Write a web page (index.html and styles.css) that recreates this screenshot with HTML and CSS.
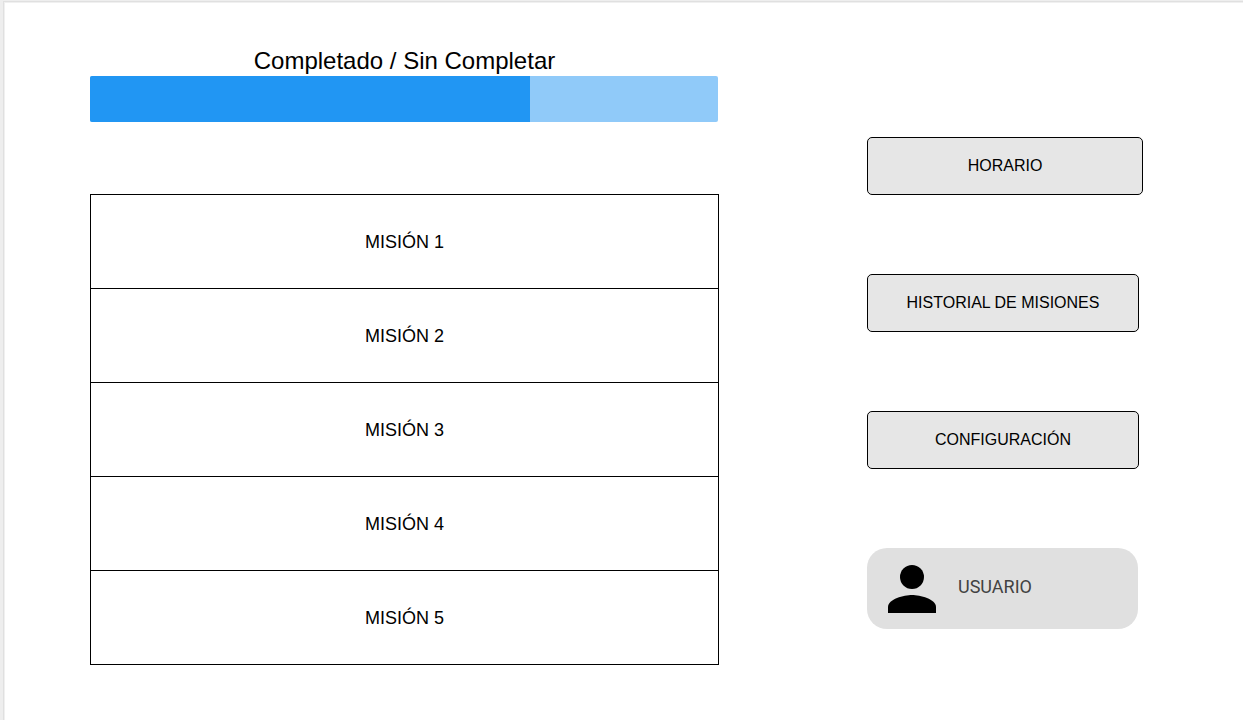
FILE: index.html
```html
<!DOCTYPE html>
<html lang="es">
<head>
<meta charset="utf-8">
<meta name="viewport" content="width=device-width, initial-scale=1">
<title>Misiones</title>
<link rel="stylesheet" href="styles.css">
</head>
<body>
<div class="page">
  <main class="missions">
    <label class="progress-label" for="progress">Completado / Sin Completar</label>
    <progress class="progress" id="progress" value="70" max="100"></progress>
    <ul class="mission-list">
      <li class="mission">MISIÓN 1</li>
      <li class="mission">MISIÓN 2</li>
      <li class="mission">MISIÓN 3</li>
      <li class="mission">MISIÓN 4</li>
      <li class="mission">MISIÓN 5</li>
    </ul>
  </main>
  <nav class="menu">
    <button class="menu-button menu-button-wide" type="button">HORARIO</button>
    <button class="menu-button" type="button">HISTORIAL DE MISIONES</button>
    <button class="menu-button" type="button">CONFIGURACIÓN</button>
    <button class="user-button" type="button">
      <svg class="user-icon" viewBox="0 0 48 48" aria-hidden="true">
        <circle cx="24" cy="12" r="12"/>
        <path d="M24 30C16 30 0 34 0 42V48H48V42C48 34 32 30 24 30Z"/>
      </svg>
      <span class="user-name">USUARIO</span>
    </button>
  </nav>
</div>
</body>
</html>
```
FILE: styles.css
```css
* {
  box-sizing: border-box;
}

body {
  margin: 0;
  padding: 1px 0 0 3px;
  background: #eeeeee;
  color: #000;
  font-family: "Liberation Sans", Arial, sans-serif;
}

.page {
  display: grid;
  grid-template-columns: 629fr 276fr;
  column-gap: 148px;
  min-height: calc(100vh - 1px);
  padding: 44px 100px 20px 86px;
  border-top: 1px solid #e0e0e0;
  border-left: 1px solid #e0e0e0;
  background: #fff;
  box-shadow: inset 1px 1px #f0f0f0;
}

.missions {
  display: flex;
  flex-direction: column;
}

.progress-label {
  font-size: 24px;
  line-height: 30px;
  text-align: center;
}

.progress {
  appearance: none;
  display: block;
  width: 100%;
  height: 46px;
  padding-right: 1px;
  border: 0;
  background: transparent;
}

.progress::-webkit-progress-bar {
  border-radius: 2px;
  background: #90caf9;
  overflow: hidden;
}

.progress::-webkit-progress-value {
  background: #2196f3;
}

.mission-list {
  margin: 72px 0 0;
  padding: 0;
  border: 1px solid #000;
  border-bottom: 0;
  list-style: none;
}

.mission {
  display: flex;
  align-items: center;
  justify-content: center;
  height: 94px;
  padding-top: 2px;
  border-bottom: 1px solid #000;
  font-size: 18px;
}

.menu {
  display: flex;
  flex-direction: column;
  gap: 79px;
  padding: 91px 4px 0 0;
}

.menu-button {
  height: 58px;
  padding: 0 8px;
  border: 1px solid #000;
  border-radius: 5px;
  background: #e6e6e6;
  color: #000;
  font-family: inherit;
  font-size: 16px;
}

.menu-button-wide {
  margin-right: -4px;
}

.user-button {
  display: flex;
  align-items: center;
  gap: 22px;
  height: 81px;
  margin-right: 1px;
  padding: 0 21px;
  border: 0;
  border-radius: 20px;
  background: #e0e0e0;
  color: #424242;
  font-family: Roboto, sans-serif;
  font-size: 18px;
}

.user-icon {
  width: 48px;
  height: 48px;
}

.user-name {
  padding-bottom: 4px;
}
```
